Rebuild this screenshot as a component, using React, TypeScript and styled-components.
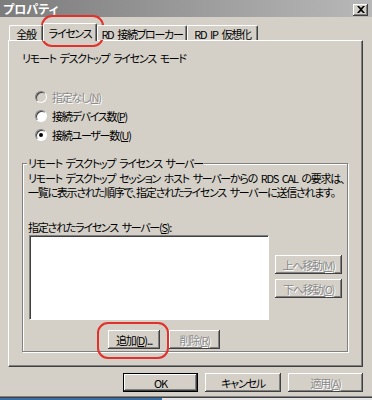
import styled, { createGlobalStyle, css } from 'styled-components'

const GlobalStyle = createGlobalStyle`
  html, body {
    margin: 0;
    padding: 0;
    background: #d4d0c8;
  }
`

const Window = styled.div`
  position: relative;
  display: flex;
  flex-direction: column;
  width: 372px;
  height: 400px;
  overflow: hidden;
  background: #d4d0c8;
  font-family: "Noto Sans CJK JP", "DejaVu Sans", sans-serif;
  font-size: 11px;
  letter-spacing: -1.25px;
  word-spacing: 2.5px;
  font-feature-settings: "palt";
  color: #000;
`

const TitleBar = styled.div`
  display: flex;
  align-items: center;
  justify-content: space-between;
  height: 17px;
  padding: 0 4px 0 3px;
  background: linear-gradient(to right, #7c7c7c, #b8b8b8);
  color: #fff;
  font-size: 12px;
  font-weight: bold;
  letter-spacing: 0;
`

const CloseButton = styled.div`
  display: flex;
  align-items: center;
  justify-content: center;
  width: 15px;
  height: 12px;
  margin-top: 2px;
  background: #d4d0c8;
  box-shadow:
    inset -1px -1px #404040,
    inset 1px 1px #fff,
    inset -2px -2px #808080;
`

const Body = styled.div`
  display: flex;
  flex-direction: column;
  padding: 6px 9px 0 8px;
`

const TabStrip = styled.div`
  position: relative;
  z-index: 1;
  display: flex;
  align-items: flex-end;
  height: 17px;
  padding-left: 1px;
`

const Tab = styled.div<{ $w: number; $active?: boolean }>`
  display: flex;
  align-items: center;
  justify-content: center;
  box-sizing: border-box;
  width: ${(p) => p.$w}px;
  height: 15px;
  padding-top: 1px;
  background: #d4d0c8;
  border-top: 1px solid #fff;
  border-left: 1px solid #fff;
  border-right: 1px solid #404040;
  border-radius: 2px 2px 0 0;
  box-shadow: inset -1px 0 #808080;
  white-space: nowrap;
  ${(p) =>
    p.$active &&
    css`
      height: 18px;
      margin-bottom: -1px;
      padding-bottom: 1px;
    `}
`

const Panel = styled.div`
  display: flex;
  flex-direction: column;
  box-sizing: border-box;
  height: 327px;
  padding: 10px 14px 0 13px;
  border: 1px solid;
  border-color: #fff #404040 #404040 #fff;
  box-shadow: inset -1px -1px #808080;
`

const Label = styled.div`
  line-height: 14px;
  white-space: nowrap;
`

const RadioList = styled.div`
  display: flex;
  flex-direction: column;
  margin-top: 22px;
  padding-left: 13px;
`

const RadioRow = styled.div<{ $disabled?: boolean }>`
  display: flex;
  align-items: center;
  gap: 5px;
  height: 19px;
  ${(p) =>
    p.$disabled &&
    css`
      color: #8a8a8a;
      text-shadow: 1px 1px #fff;
    `}
`

const RadioCircle = styled.span<{ $disabled?: boolean; $checked?: boolean }>`
  position: relative;
  box-sizing: border-box;
  width: 12px;
  height: 12px;
  border-radius: 50%;
  background: ${(p) => (p.$disabled ? '#d4d0c8' : '#fff')};
  border: 1px solid;
  border-color: #808080 #fff #fff #808080;
  box-shadow: inset 1px 1px #404040;
  ${(p) =>
    p.$checked &&
    css`
      &::after {
        content: '';
        position: absolute;
        left: 3px;
        top: 3px;
        width: 4px;
        height: 4px;
        border-radius: 50%;
        background: #000;
      }
    `}
`

const GroupBox = styled.fieldset`
  margin: 12px 0 0;
  padding: 0 5px 2px;
  min-width: 0;
  border: 1px solid #808080;
  box-shadow:
    inset 1px 1px #fff,
    1px 1px #fff;
`

const Legend = styled.legend`
  padding: 0 1px;
  margin-left: -1px;
  line-height: 14px;
  background: #d4d0c8;
`

const Description = styled.div`
  padding-top: 1px;
  line-height: 14px;
  white-space: nowrap;
`

const ServerLabel = styled(Label)`
  margin-top: 21px;
`

const ListRow = styled.div`
  display: flex;
  gap: 6px;
  margin-top: 1px;
  padding-left: 1px;
`

const ListBox = styled.div`
  box-sizing: border-box;
  width: 241px;
  height: 85px;
  background: #fff;
  border: 1px solid;
  border-color: #808080 #fff #fff #808080;
  box-shadow: inset 1px 1px #404040;
`

const SideButtons = styled.div`
  display: flex;
  flex-direction: column;
  gap: 5px;
  padding-top: 20px;
`

const Button = styled.button<{ $w: number; $default?: boolean }>`
  box-sizing: border-box;
  width: ${(p) => p.$w}px;
  height: 19px;
  padding: 0;
  font: inherit;
  letter-spacing: inherit;
  word-spacing: inherit;
  font-feature-settings: inherit;
  line-height: 14px;
  color: #000;
  background: #d4d0c8;
  border: 0;
  box-shadow:
    inset -1px -1px #404040,
    inset 1px 1px #fff,
    inset -2px -2px #808080;
  white-space: nowrap;
  &:disabled {
    color: #8a8a8a;
    text-shadow: 1px 1px #fff;
  }
  ${(p) =>
    p.$default &&
    css`
      box-shadow:
        inset 0 0 0 1px #000,
        inset -2px -2px #404040,
        inset 2px 2px #fff,
        inset -3px -3px #808080;
    `}
`

const AddRow = styled.div`
  display: flex;
  gap: 9px;
  margin-top: 10px;
  padding-left: 80px;
`

const Footer = styled.div`
  display: flex;
  justify-content: flex-end;
  gap: 7px;
  margin-top: 6px;
`

const BottomEdge = styled.div`
  margin-top: auto;
  height: 2px;
  border-top: 1px solid #808080;
  border-bottom: 1px solid #404040;
  box-sizing: border-box;
`

const Taskbar = styled.div`
  height: 2px;
  background: linear-gradient(to right, #3a6ea5 162px, #e4e4e4 162px);
`

const Highlight = styled.div<{ $x: number; $y: number; $w: number; $h: number }>`
  position: absolute;
  left: ${(p) => p.$x}px;
  top: ${(p) => p.$y}px;
  width: ${(p) => p.$w}px;
  height: ${(p) => p.$h}px;
  box-sizing: border-box;
  border: 2px solid #e2302b;
  border-radius: 11px;
  pointer-events: none;
`

export default function App() {
  return (
    <>
      <GlobalStyle />
      <Window>
        <TitleBar>
          <span>プロパティ</span>
          <CloseButton>
            <svg width="8" height="7" viewBox="0 0 8 7">
              <path d="M0 0h2l2 2 2-2h2L5 3.5 8 7H6L4 5 2 7H0l3-3.5z" fill="#000" />
            </svg>
          </CloseButton>
        </TitleBar>

        <Body>
          <TabStrip>
            <Tab $w={34}>全般</Tab>
            <Tab $w={54} $active>ライセンス</Tab>
            <Tab $w={90}>RD 接続ブローカー</Tab>
            <Tab $w={71}>RD IP 仮想化</Tab>
          </TabStrip>

          <Panel>
            <Label>リモート デスクトップ ライセンス モード</Label>

            <RadioList>
              <RadioRow $disabled>
                <RadioCircle $disabled />
                <span>指定なし(<u>N</u>)</span>
              </RadioRow>
              <RadioRow>
                <RadioCircle />
                <span>接続デバイス数(<u>P</u>)</span>
              </RadioRow>
              <RadioRow>
                <RadioCircle $checked />
                <span>接続ユーザー数(<u>U</u>)</span>
              </RadioRow>
            </RadioList>

            <GroupBox>
              <Legend>リモート デスクトップ ライセンス サーバー</Legend>
              <Description>
                リモート デスクトップ セッション ホスト サーバーからの RDS CAL の要求は、
                <br />
                一覧に表示された順序で、指定されたライセンス サーバーに送信されます。
              </Description>
              <ServerLabel>
                指定されたライセンス サーバー(<u>S</u>):
              </ServerLabel>
              <ListRow>
                <ListBox />
                <SideButtons>
                  <Button $w={67} disabled>
                    上へ移動(<u>M</u>)
                  </Button>
                  <Button $w={67} disabled>
                    下へ移動(<u>O</u>)
                  </Button>
                </SideButtons>
              </ListRow>
              <AddRow>
                <Button $w={52}>
                  追加(<u>D</u>)...
                </Button>
                <Button $w={51} disabled>
                  削除(<u>R</u>)
                </Button>
              </AddRow>
            </GroupBox>
          </Panel>

          <Footer>
            <Button $w={75} $default>OK</Button>
            <Button $w={76}>キャンセル</Button>
            <Button $w={75} disabled>
              適用(<u>A</u>)
            </Button>
          </Footer>
        </Body>

        <BottomEdge />
        <Taskbar />

        <Highlight $x={41} $y={15} $w={63} $h={32} />
        <Highlight $x={97} $y={322} $w={72} $h={37} />
      </Window>
    </>
  )
}
